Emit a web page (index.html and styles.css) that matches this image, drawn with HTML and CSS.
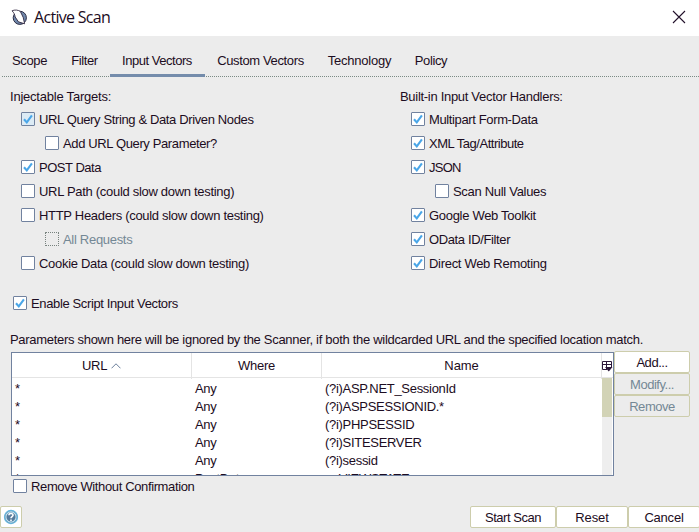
FILE: index.html
```html
<!DOCTYPE html>
<html lang="en">
<head>
<meta charset="utf-8">
<title>Active Scan</title>
<link rel="stylesheet" href="styles.css">
</head>
<body>
<svg class="defs" width="0" height="0" aria-hidden="true">
  <symbol id="tick" viewBox="0 0 14 14"><path d="M3 7.2 5.8 10.4 10.9 3.4" fill="none" stroke="#4aa6e8" stroke-width="2.1"/></symbol>
</svg>
<div class="dialog">
  <header class="titlebar">
    <svg class="logo" width="17" height="17" viewBox="0 0 17 17">
      <circle cx="8.8" cy="8.8" r="6.6" fill="#7088ab" stroke="#2b2b42" stroke-width="1"/>
      <path d="M1 1.8C3.5 .6 7.5 .8 9.4 2.6L12.2 8.4 13.6 14.8 7.4 12.8 4.2 8C3.8 5.4 2.8 3.6 1 1.8Z" fill="#fff" stroke="#20142f" stroke-width=".8"/>
    </svg>
    <h1 class="title">Active Scan</h1>
    <svg class="close" width="14" height="14" viewBox="0 0 14 14"><path d="M1 1 13 13M13 1 1 13" stroke="#23112b" stroke-width="1.1"/></svg>
  </header>
  <nav class="tabs">
    <span class="tab scope t4">Scope</span><span class="tab filter t4">Filter</span><span class="tab vectors active t5">Input Vectors</span><span class="tab custom t4">Custom Vectors</span><span class="tab tech t2">Technology</span><span class="tab policy t4">Policy</span>
  </nav>
  <main class="content">
    <div class="columns">
      <section class="column">
        <h2 class="t2">Injectable Targets:</h2>
        <label class="check"><i class="box focused"><svg><use href="#tick"/></svg></i><span class="t4">URL Query String &amp; Data Driven Nodes</span></label>
        <label class="check sub"><i class="box"></i><span class="t4">Add URL Query Parameter?</span></label>
        <label class="check"><i class="box"><svg><use href="#tick"/></svg></i><span class="t5">POST Data</span></label>
        <label class="check"><i class="box"></i><span>URL Path (could slow down testing)</span></label>
        <label class="check"><i class="box"></i><span>HTTP Headers (could slow down testing)</span></label>
        <label class="check sub disabled"><i class="box"></i><span>All Requests</span></label>
        <label class="check"><i class="box"></i><span>Cookie Data (could slow down testing)</span></label>
      </section>
      <section class="column">
        <h2>Built-in Input Vector Handlers:</h2>
        <label class="check"><i class="box"><svg><use href="#tick"/></svg></i><span class="t4">Multipart Form-Data</span></label>
        <label class="check"><i class="box"><svg><use href="#tick"/></svg></i><span class="t5">XML Tag/Attribute</span></label>
        <label class="check"><i class="box"><svg><use href="#tick"/></svg></i><span class="t7">JSON</span></label>
        <label class="check sub"><i class="box"></i><span>Scan Null Values</span></label>
        <label class="check"><i class="box"><svg><use href="#tick"/></svg></i><span>Google Web Toolkit</span></label>
        <label class="check"><i class="box"><svg><use href="#tick"/></svg></i><span class="t4">OData ID/Filter</span></label>
        <label class="check"><i class="box"><svg><use href="#tick"/></svg></i><span>Direct Web Remoting</span></label>
      </section>
    </div>
    <label class="check outer script"><i class="box"><svg><use href="#tick"/></svg></i><span class="t4">Enable Script Input Vectors</span></label>
    <p class="note"><span>Parameters shown here will be ignored by the Scanner, if both the wildcarded URL and the specified location match.</span></p>
    <div class="params">
      <div class="table">
        <div class="row head">
          <span>URL <svg width="10" height="6" viewBox="0 0 10 6"><path d="M.5 5.3 5 .8 9.5 5.3" fill="none" stroke="#6b7f9b"/></svg></span><span>Where</span><span class="t0">Name</span>
          <b class="picker"><svg width="11" height="11" viewBox="0 0 11 11"><path d="M5 8.5H.5V.5H9.5V6M.5 3.5H9.5M4.5 .5V8.5" fill="none" stroke="#2b1738"/><path d="M3 6H10.5L6.8 10.5Z" fill="#2b1738"/></svg></b>
        </div>
        <div class="body">
          <div class="rows">
            <div class="row"><span>*</span><span>Any</span><span>(?i)ASP.NET_SessionId</span></div>
            <div class="row"><span>*</span><span>Any</span><span>(?i)ASPSESSIONID.*</span></div>
            <div class="row"><span>*</span><span>Any</span><span>(?i)PHPSESSID</span></div>
            <div class="row"><span>*</span><span>Any</span><span>(?i)SITESERVER</span></div>
            <div class="row"><span>*</span><span>Any</span><span>(?i)sessid</span></div>
            <div class="row"><span>*</span><span>PostData</span><span>__VIEWSTATE</span></div>
          </div>
          <div class="scroll"><div class="thumb"></div></div>
        </div>
      </div>
      <div class="side">
        <button class="t5">Add...</button><button class="t5" disabled>Modify...</button><button class="t5" disabled>Remove</button>
      </div>
    </div>
    <label class="check outer confirm"><i class="box"></i><span class="t4">Remove Without Confirmation</span></label>
  </main>
  <footer class="footer">
    <button class="help" aria-label="Help"><svg width="16" height="16" viewBox="0 0 16 16"><circle cx="8" cy="8" r="6.5" fill="#557a9b" stroke="#65b5dc" stroke-width="1.3"/><circle cx="8" cy="8" r="5.1" fill="none" stroke="#c4e6f4" stroke-width="1.1"/><path d="M5.8 6.2C6 3.8 10.4 4 10 6.4 9.8 7.6 8 7.7 8 9.3M8 10.4V12" fill="none" stroke="#fff" stroke-width="1.6"/></svg></button>
    <button class="start t5">Start Scan</button><button class="reset t0">Reset</button><button class="cancel t2">Cancel</button>
  </footer>
</div>
</body>
</html>
```
FILE: styles.css
```css
* { box-sizing: border-box; }
body { margin: 0; font: 13px/18px "Liberation Sans", Arial, sans-serif; letter-spacing: -.3px; color: #1c0c22; background: #ececec; }
.t0 { letter-spacing: -.1px; }
.t2 { letter-spacing: -.22px; }
.t4 { letter-spacing: -.37px; }
.t5 { letter-spacing: -.47px; }
.t7 { letter-spacing: -.75px; }
.defs { position: absolute; }
.dialog { width: 699px; height: 532px; overflow: hidden; display: flex; flex-direction: column; }
.titlebar { height: 36px; flex: none; background: #fff; display: flex; align-items: center; padding: 0 13px 2px 11px; }
.title { margin: 0 auto 0 6px; font: 16px/20px "Open Sans", "Noto Sans", sans-serif; letter-spacing: -.7px; }
.tabs { height: 41px; flex: none; display: flex; margin-left: 2px; border-bottom: 1px dotted #7b8b85; }
.tab { height: 41px; padding-top: 16px; text-align: center; white-space: nowrap; }
.scope { width: 55px; } .filter { width: 55px; } .vectors { width: 95px; margin-left: -2px; }
.custom { width: 111px; } .tech { width: 87px; } .policy { width: 56px; }
.active { border-bottom: 3px solid #748cab; }
.vectors { text-indent: -1px; }
.content { padding: 7px 9px 0 10px; flex: none; }
.columns { display: grid; grid-template-columns: 390px 1fr; }
h2 { font: inherit; margin: 0; height: 23px; line-height: 25px; white-space: nowrap; }
.check { display: flex; align-items: center; height: 24px; padding-left: 11px; gap: 4px; white-space: nowrap; }
.check > span { padding-top: 2px; }
.sub { padding-left: 35px; }
.box { width: 14px; height: 14px; flex: none; border: 1px solid #71829f; border-radius: 1px; background: #fff; }
.box svg { display: block; width: 14px; height: 14px; margin: -1px; }
.focused { background: #dcebf5; }
.disabled { color: #748895; }
.disabled .box { border: 1px dotted #77827e; background: transparent; }
.outer { padding-left: 3px; }
.script { margin-top: 16px; }
.note { margin: 16px 0 0; height: 21px; white-space: nowrap; }
.params { display: flex; align-items: flex-start; }
.table { width: 603px; height: 124px; border: 1px solid #71829f; background: #fff; overflow: hidden; display: flex; flex-direction: column; margin-left: 1px; }
.row { display: grid; grid-template-columns: 180px 130px 1fr; height: 18px; }
.row > span { padding-left: 3px; white-space: nowrap; }
.head { height: 25px; flex: none; grid-template-columns: 180px 130px 280px 11px; border-bottom: 1px solid #e4e4e4; line-height: 26px; }
.head > span { text-align: center; border-right: 1px solid #e4e4e4; padding: 0; }
.head > span svg { vertical-align: 1px; margin-left: 1px; }
.picker { display: flex; align-items: center; }
.body { display: flex; flex: 1; min-height: 0; overflow: hidden; }
.rows { flex: 1; padding-top: 2px; }
.scroll { width: 11px; background: #eee; border-right: 1px solid #fff; }
.thumb { height: 39px; background: #d2d3b6; }
button { font: inherit; color: inherit; background: #fff; border: 1px solid #cdcdac; border-radius: 2px; padding: 1px 0 0; height: 22px; }
button:disabled { color: #748895; background: #ececec; }
.side { width: 76px; display: flex; flex-direction: column; margin-top: -1px; }
.confirm { height: 22px; margin-top: -1px; }
.confirm > span { padding-top: 1px; }
.footer { display: flex; margin-top: auto; height: 26px; padding-bottom: 4px; }
.help { width: 22px; margin-right: auto; display: flex; align-items: center; justify-content: center; padding: 0; }
.start { width: 86px; } .reset { width: 72px; } .cancel { width: 72px; margin-right: -1px; }
```
